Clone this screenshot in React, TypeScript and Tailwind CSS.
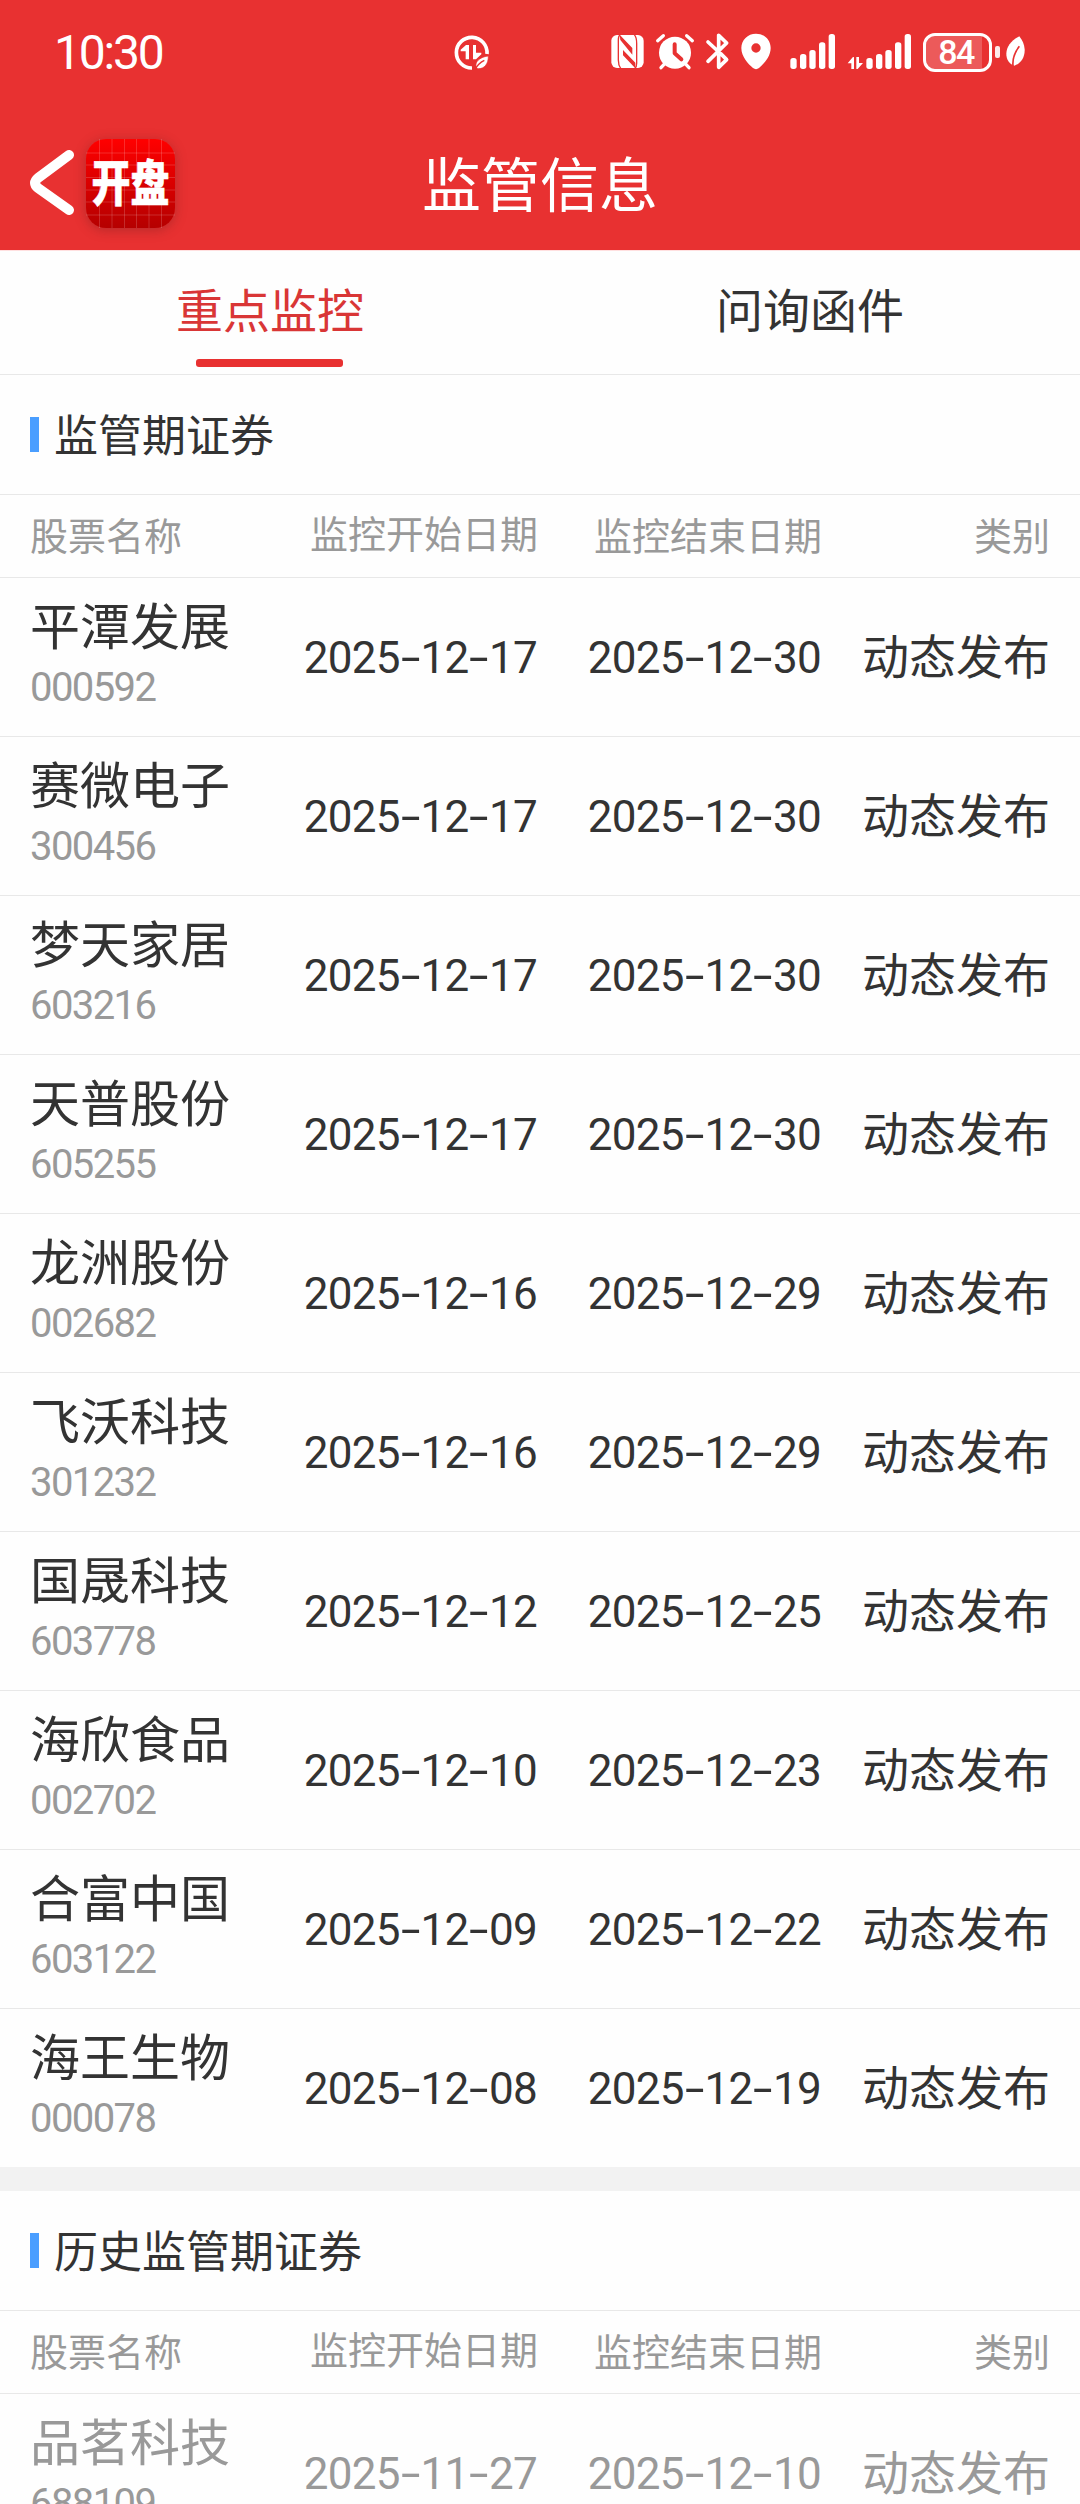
type Stock = {
  name: string;
  code: string;
  start: string;
  end: string;
};

const stocks: Stock[] = [
  { name: "平潭发展", code: "000592", start: "2025-12-17", end: "2025-12-30" },
  { name: "赛微电子", code: "300456", start: "2025-12-17", end: "2025-12-30" },
  { name: "梦天家居", code: "603216", start: "2025-12-17", end: "2025-12-30" },
  { name: "天普股份", code: "605255", start: "2025-12-17", end: "2025-12-30" },
  { name: "龙洲股份", code: "002682", start: "2025-12-16", end: "2025-12-29" },
  { name: "飞沃科技", code: "301232", start: "2025-12-16", end: "2025-12-29" },
  { name: "国晟科技", code: "603778", start: "2025-12-12", end: "2025-12-25" },
  { name: "海欣食品", code: "002702", start: "2025-12-10", end: "2025-12-23" },
  { name: "合富中国", code: "603122", start: "2025-12-09", end: "2025-12-22" },
  { name: "海王生物", code: "000078", start: "2025-12-08", end: "2025-12-19" },
];

const history: Stock[] = [
  { name: "品茗科技", code: "688109", start: "2025-11-27", end: "2025-12-10" },
];

const DataSaverIcon = () => (
  <svg className="ml-[288px] h-10 w-10" viewBox="0 0 120 120" fill="none">
    <path d="M63 108A46 46 0 1 1 108 66" stroke="#fff" strokeWidth="11" />
    <path d="M54 39V82H44V58H29V53L45 39ZM66 39H75V62H91V67L75 82H66Z" fill="#fff" />
    <path
      d="M112 73C108 71 78 78 75 96C74 105 76 109 81 110C101 111 112 95 112 73Z"
      fill="#fff"
      stroke="#e83131"
      strokeWidth="2"
    />
    <path d="M72 113C78 100 88 91 100 85" stroke="#e83131" strokeWidth="4" />
  </svg>
);

const NfcIcon = () => (
  <svg className="h-10 w-[35px]" viewBox="30 36 105 120">
    <rect x="34" y="45" width="97" height="99" rx="17" fill="#fff" />
    <path
      d="M60 44Q55 48 55 60V120Q55 136 62 145M105 145Q110 141 110 130V70Q110 52 103 44"
      stroke="#e83131"
      strokeWidth="4"
      fill="none"
    />
    <path d="M59 44L97 84V104L61 60ZM69 90L106 128V145L69 106Z" fill="#e83131" />
  </svg>
);

const AlarmIcon = () => (
  <svg className="ml-[10px] h-10 w-10" viewBox="165 36 120 120" fill="none">
    <circle cx="225" cy="98" r="48" fill="#fff" />
    <path
      d="M173 62L190 47M277 62L260 47M195 130L183 143M255 130L267 143"
      stroke="#fff"
      strokeWidth="10"
      strokeLinecap="round"
    />
    <path
      d="M224 73V100L244 118"
      stroke="#e83131"
      strokeWidth="12"
      strokeLinecap="round"
      strokeLinejoin="round"
    />
  </svg>
);

const BluetoothIcon = () => (
  <svg className="ml-[10px] h-10 w-[25px]" viewBox="315 36 75 120" fill="none">
    <path
      d="M324 66L350 90M324 124L380 69L356 46V83M356 107V142L380 119L362 101"
      stroke="#fff"
      strokeWidth="11"
      strokeLinecap="round"
      strokeLinejoin="round"
    />
  </svg>
);

const PinIcon = () => (
  <svg className="ml-[10px] h-10 w-8" viewBox="420 36 96 120">
    <path
      fillRule="evenodd"
      d="M468 41C443 41 424 60 424 84C424 110 445 132 459 144Q468 151 477 144C491 132 512 110 512 84C512 60 493 41 468 41ZM468 70A14 14 0 1 1 468 98A14 14 0 1 1 468 70Z"
      fill="#fff"
    />
  </svg>
);

const SignalBars = () => (
  <svg className="h-10 w-[45px]" viewBox="0 36 135 120" fill="#fff">
    <rect x="1" y="114" width="19" height="33" rx="8" />
    <rect x="30" y="102" width="19" height="45" rx="8" />
    <rect x="58" y="90" width="19" height="57" rx="8" />
    <rect x="87" y="67" width="19" height="80" rx="8" />
    <rect x="116" y="42" width="19" height="105" rx="8" />
  </svg>
);

const TransferIcon = () => (
  <svg className="ml-[12px] h-10 w-[19px]" viewBox="51 36 57 120" fill="#fff">
    <path d="M72 111V147H64V130H53L68 112ZM79 111H87V129H99L83 147H79Z" />
  </svg>
);

const Battery = () => (
  <div className="ml-3 flex items-center">
    <div className="relative flex h-[39px] w-[69px] items-center justify-center overflow-hidden rounded-[12px] border-3 border-white">
      <div className="absolute top-0 left-0 h-full w-[56px] bg-white/20" />
      <span className="relative mr-[3px] text-[34px] leading-none font-medium tracking-[-1.5px]">
        84
      </span>
    </div>
    <div className="ml-[3px] h-3 w-[5px] rounded-[2px] bg-white/90" />
  </div>
);

const LeafIcon = () => (
  <svg className="ml-[5px] h-10 w-5" viewBox="528 36 60 120" fill="none">
    <path
      d="M571 49C548 61 532 80 532 101C532 119 541 131 556 137C576 130 588 112 587 88C586 73 580 60 571 49Z"
      fill="#fff"
    />
    <path d="M552 138C550 117 557 97 571 79" stroke="#e83131" strokeWidth="5" />
  </svg>
);

const StatusBar = () => (
  <div className="flex h-[104px] items-center pr-[55px] pl-[54px]">
    <span className="mt-[2px] w-[109px] text-[48px] leading-none tracking-[-2.2px]">10:30</span>
    <DataSaverIcon />
    <div className="ml-auto flex items-center">
      <NfcIcon />
      <AlarmIcon />
      <BluetoothIcon />
      <PinIcon />
      <div className="w-[18px]" />
      <SignalBars />
      <TransferIcon />
      <SignalBars />
      <Battery />
      <LeafIcon />
    </div>
  </div>
);

const AppLogo = () => (
  <div className="relative ml-[12px] flex h-[89px] w-[89px] items-center justify-center rounded-[20px] bg-linear-to-b from-[#ff0000] to-[#b50000] shadow-[0_2px_12px_rgba(90,30,30,0.35)]">
    <svg className="absolute inset-0 h-full w-full" viewBox="0 0 89 89">
      <path
        d="M13.5 0V89M26 0V89M38.5 0V89M50.5 0V89M63 0V89M75.5 0V89M0 14H89M0 26H89M0 38.5H89M0 51H89M0 63H89M0 76H89"
        stroke="#fff"
        strokeOpacity="0.17"
      />
    </svg>
    <span className="relative mt-[3px] origin-center scale-y-[1.24] text-[39px] leading-none font-black whitespace-nowrap [-webkit-text-stroke:0.5px_white]">
      开盘
    </span>
  </div>
);

const NavBar = () => (
  <div className="grid h-[146px] grid-cols-[1fr_auto_1fr] items-start pt-[35px]">
    <div className="flex items-center pl-[28px]">
      <svg className="h-[70px] w-[46px]" viewBox="0 0 46 70" fill="none">
        <path
          d="M41 6L10 29Q4 34 10 39L41 61"
          stroke="#fff"
          strokeWidth="10"
          strokeLinecap="round"
          strokeLinejoin="round"
        />
      </svg>
      <AppLogo />
    </div>
    <h1 className="pt-[18px] text-[59px] leading-none">监管信息</h1>
  </div>
);

const Tabs = () => (
  <div className="grid h-[125px] grid-cols-2 border-t border-b border-t-[#ffe0e0] border-b-[#e8e8e8] text-center text-[47px]">
    <div className="flex flex-col items-center text-[#d93636]">
      <span className="h-[108px] pt-[37px] leading-none">重点监控</span>
      <div className="mr-[2px] h-2 w-[147px] rounded-[3px] bg-[#e83131]" />
    </div>
    <span className="pt-[37px] leading-none text-[#333]">问询函件</span>
  </div>
);

const DateText = ({ value }: { value: string }) => (
  <span className="pt-[2px] pr-px text-right text-[44px] leading-none tracking-[-0.7px] whitespace-nowrap">
    {value.split("-").map((part, i) => (
      <span key={i}>
        {i > 0 && <span className="inline-block w-[20.5px] scale-x-[1.6] text-center">-</span>}
        {part}
      </span>
    ))}
  </span>
);

type SectionProps = {
  title: string;
  rows: Stock[];
  muted?: boolean;
};

const Section = ({ title, rows, muted }: SectionProps) => (
  <section>
    <div className="flex h-[120px] items-center border-b border-[#e8e8e8] pl-[30px]">
      <div className="h-[35px] w-[9px] bg-[#4a9eff]" />
      <h2 className="mt-[4px] ml-[15px] text-[44px] leading-none text-[#333]">{title}</h2>
    </div>
    <div className="grid h-[83px] grid-cols-[220px_288px_284px_228px] items-center border-b border-[#e8e8e8] px-[30px] pt-[2px] text-right text-[38px] leading-none text-[#999]">
      <span className="text-left">股票名称</span>
      <span className="pb-[5px]">监控开始日期</span>
      <span>监控结束日期</span>
      <span>类别</span>
    </div>
    <div className="divide-y divide-[#e8e8e8]">
      {rows.map((row) => (
        <div
          key={row.code}
          className={`box-content grid h-[158px] grid-cols-[220px_288px_284px_228px] items-center px-[30px] ${
            muted ? "text-[#999]" : "text-[#333]"
          }`}
        >
          <div className="flex flex-col pb-[3px]">
            <span className="text-[50px] leading-none">{row.name}</span>
            <span className="mt-[15px] text-[40px] leading-none tracking-[-1.6px] text-[#999]">
              {row.code}
            </span>
          </div>
          <DateText value={row.start} />
          <DateText value={row.end} />
          <span className="pt-px text-right text-[47px] leading-none">动态发布</span>
        </div>
      ))}
    </div>
  </section>
);

const App = () => {
  return (
    <div
      lang="zh-CN"
      className="h-[2504px] w-[1080px] overflow-hidden bg-[#fefefe] font-['Roboto','Noto_Sans_CJK_SC',sans-serif]"
    >
      <header className="bg-[#e83131] text-white">
        <StatusBar />
        <NavBar />
      </header>
      <Tabs />
      <Section title="监管期证券" rows={stocks} />
      <div className="h-6 bg-[#f2f2f2]" />
      <Section title="历史监管期证券" rows={history} muted />
    </div>
  );
};

export default App;
